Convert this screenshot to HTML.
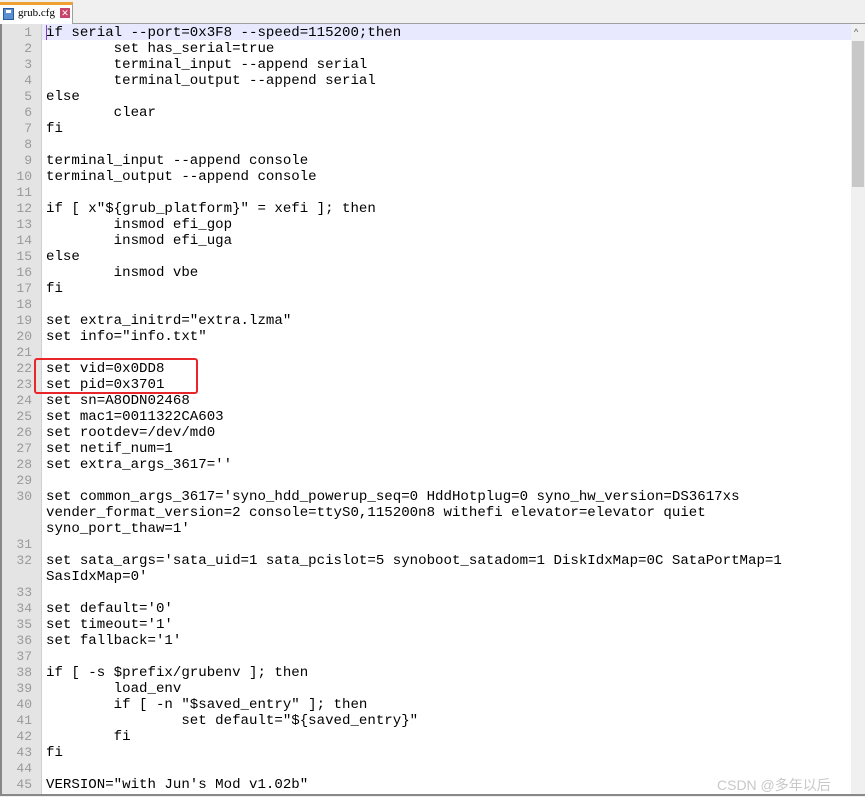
<!DOCTYPE html>
<html><head><meta charset="utf-8"><style>
*{margin:0;padding:0;box-sizing:border-box}
body{width:865px;height:797px;background:#f0f0f0;position:relative;overflow:hidden;font-family:"Liberation Mono",monospace}
.tabbar{position:absolute;left:0;top:0;width:865px;height:24px;background:#f0f0f0;border-bottom:1px solid #a0a0a0}
.tab{position:absolute;left:0;top:2px;width:73px;height:22px;background:#fff;border-top:3px solid #f0a030;border-right:1px solid #a0a0a0}
.tab .ic{position:absolute;left:3px;top:3px;width:11px;height:12px;background:#5b8fd0;border:1px solid #2a5a9a}
.tab .ic:after{content:"";position:absolute;left:2px;top:1px;width:5px;height:3px;background:#fff}
.tab .t{position:absolute;left:18px;top:2px;font-family:"Liberation Serif","Noto Serif CJK SC",serif;font-size:11px;color:#000}
.tab .x{position:absolute;left:60px;top:3px;width:10px;height:10px;background:#c8446a;color:#fff;font-size:9px;line-height:10px;text-align:center;font-family:"Liberation Sans",sans-serif}
.editor{position:absolute;left:0;top:24px;width:865px;height:772px;background:#fff;border-left:2px solid #888;border-bottom:2px solid #888}
.gutter{position:absolute;left:0;top:0;width:40px;height:100%;background:#e4e4e4;border-right:1px solid #d0d0d0}
.cur{position:absolute;left:40px;top:0;width:809px;height:16px;background:#e8e8ff}
.row{position:absolute;left:0;height:16px;line-height:16px;font-size:14.1px;white-space:pre;color:#000}
.n{position:absolute;left:0;width:32px;text-align:right;color:#999;font-size:13px}
.c{position:absolute;left:46px}
.sb{position:absolute;left:849px;top:0;width:14px;height:100%;background:#f0f0f0}
.thumb{position:absolute;left:1px;top:17px;width:12px;height:146px;background:#c8c8c8}
.red{position:absolute;left:34px;top:358px;width:164px;height:36px;border:2px solid #e8262a;border-radius:3px}
.wm{position:absolute;left:717px;top:775px;font-family:"Liberation Sans","Noto Sans CJK SC",sans-serif;font-size:14px;color:#c8c8c8}
.caret{position:absolute;left:46px;top:25px;width:1px;height:15px;background:#8040c0}
</style></head><body>
<div class="tabbar"><div class="tab"><div class="ic"></div><div class="t">grub.cfg</div><div class="x">✕</div></div></div>
<div class="editor">
<div class="gutter"></div>
<div class="cur"></div>
<div class="sb"><div style="position:absolute;left:3px;top:3px;font-size:9px;color:#555;font-family:'Liberation Sans',sans-serif">^</div><div class="thumb"></div></div>
</div>
<div class="caret"></div>
<div id="rows"></div>
<div class="red"></div>
<div class="wm">CSDN @多年以后</div>
<script>
var L=[
["1","if serial --port=0x3F8 --speed=115200;then"],
["2","        set has_serial=true"],
["3","        terminal_input --append serial"],
["4","        terminal_output --append serial"],
["5","else"],
["6","        clear"],
["7","fi"],
["8",""],
["9","terminal_input --append console"],
["10","terminal_output --append console"],
["11",""],
["12","if [ x\"${grub_platform}\" = xefi ]; then"],
["13","        insmod efi_gop"],
["14","        insmod efi_uga"],
["15","else"],
["16","        insmod vbe"],
["17","fi"],
["18",""],
["19","set extra_initrd=\"extra.lzma\""],
["20","set info=\"info.txt\""],
["21",""],
["22","set vid=0x0DD8"],
["23","set pid=0x3701"],
["24","set sn=A8ODN02468"],
["25","set mac1=0011322CA603"],
["26","set rootdev=/dev/md0"],
["27","set netif_num=1"],
["28","set extra_args_3617=''"],
["29",""],
["30","set common_args_3617='syno_hdd_powerup_seq=0 HddHotplug=0 syno_hw_version=DS3617xs"],
["","vender_format_version=2 console=ttyS0,115200n8 withefi elevator=elevator quiet"],
["","syno_port_thaw=1'"],
["31",""],
["32","set sata_args='sata_uid=1 sata_pcislot=5 synoboot_satadom=1 DiskIdxMap=0C SataPortMap=1"],
["","SasIdxMap=0'"],
["33",""],
["34","set default='0'"],
["35","set timeout='1'"],
["36","set fallback='1'"],
["37",""],
["38","if [ -s $prefix/grubenv ]; then"],
["39","        load_env"],
["40","        if [ -n \"$saved_entry\" ]; then"],
["41","                set default=\"${saved_entry}\""],
["42","        fi"],
["43","fi"],
["44",""],
["45","VERSION=\"with Jun's Mod v1.02b\""]
];
var h="";
for(var i=0;i<L.length;i++){
 var t=L[i][1].replace(/&/g,"&amp;").replace(/</g,"&lt;");
 h+='<div class="row" style="top:'+(25+i*16)+'px"><span class="n">'+L[i][0]+'</span><span class="c">'+t+'</span></div>';
}
document.getElementById("rows").innerHTML=h;
</script>
</body></html>
